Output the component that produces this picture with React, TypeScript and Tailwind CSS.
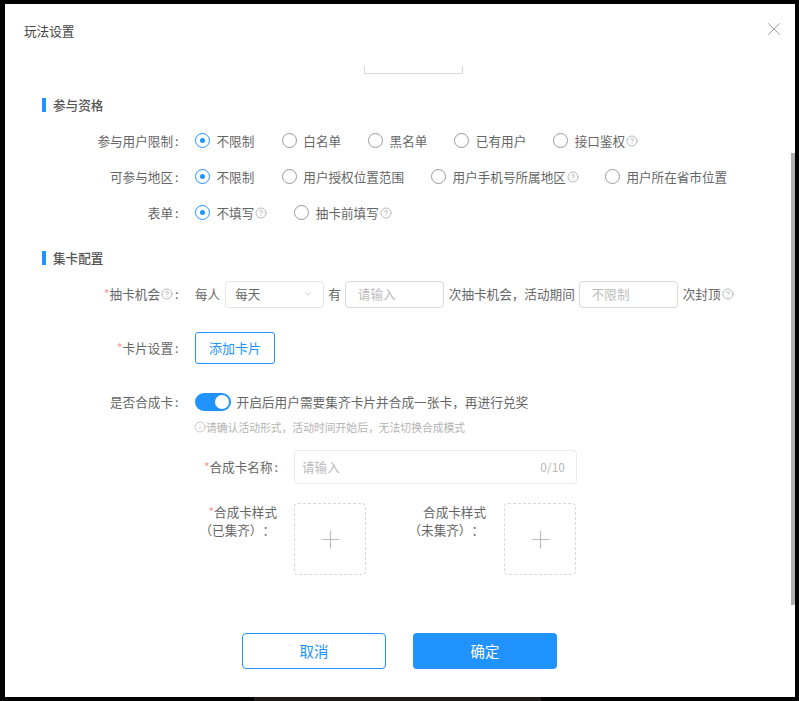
import React from 'react';
import { ChevronDown, CircleHelp, Info, Plus, X } from 'lucide-react';

const Help: React.FC = () => (
  <CircleHelp className="w-[12px] h-[12px] ml-px shrink-0 text-[#a8a8a8]" strokeWidth={1.6} />
);

const Star: React.FC = () => <span className="text-[#f89898]">*</span>;

const Colon: React.FC = () => <span className="ml-[2px]">:</span>;

const Radio: React.FC<{ label: string; checked?: boolean; help?: boolean; className?: string }> = ({
  label,
  checked,
  help,
  className,
}) => (
  <div className={`flex items-center shrink-0 ${className ?? ''}`}>
    {checked ? (
      <span className="w-[15px] h-[15px] rounded-full border border-[#2193ff] flex items-center justify-center">
        <span className="w-[5px] h-[5px] rounded-full bg-[#2193ff]" />
      </span>
    ) : (
      <span className="w-[15px] h-[15px] rounded-full border border-[#999999]" />
    )}
    <span className="ml-[6.5px]">{label}</span>
    {help && <Help />}
  </div>
);

const Row: React.FC<{ label: React.ReactNode; className?: string; children: React.ReactNode }> = ({
  label,
  className,
  children,
}) => (
  <div className={`flex items-center ${className ?? 'h-9'}`}>
    <div className="w-[136.5px] flex items-center justify-end shrink-0 whitespace-nowrap">{label}</div>
    <div className="ml-[16.5px] flex items-center">{children}</div>
  </div>
);

const Section: React.FC<{ title: string; className?: string }> = ({ title, className }) => (
  <div className={`flex items-center h-5 ${className ?? ''}`}>
    <span className="w-1 h-[14px] bg-[#2193ff]" />
    <span className="ml-[7px] font-medium text-[#555555]">{title}</span>
  </div>
);

const Upload: React.FC = () => (
  <div className="w-[72px] h-[72px] shrink-0 border border-dashed border-[#d9d9d9] rounded-sm flex items-center justify-center">
    <Plus className="w-[29px] h-[29px] text-[#bdbdbd]" strokeWidth={1} />
  </div>
);

const App: React.FC = () => {
  return (
    <div className="relative w-[799px] h-[701px] bg-black pt-1 pl-[5px] overflow-hidden font-['Noto_Sans_CJK_SC','Liberation_Sans',sans-serif] text-[12.6px] text-[#666666]">
      <div className="relative w-[790px] h-[693px] bg-white overflow-hidden">
        <div className="flex items-center justify-between h-[54px] pl-[19px] pr-[10px]">
          <span className="text-[#444444]">玩法设置</span>
          <X className="w-[22px] h-[22px] text-[#8c8c8c] -mt-[4px]" strokeWidth={0.9} />
        </div>

        <div className="pl-[37px]">
          <div className="mt-2 ml-[322px] w-[99px] h-2 border-x border-b border-[#d9d9d9]" />

          <Section title="参与资格" className="mt-[21px]" />

          <div className="mt-2">
            <Row
              label={
                <>
                  参与用户限制
                  <Colon />
                </>
              }
            >
              <Radio label="不限制" checked />
              <Radio label="白名单" className="ml-[27.5px]" />
              <Radio label="黑名单" className="ml-[27px]" />
              <Radio label="已有用户" className="ml-[27px]" />
              <Radio label="接口鉴权" help className="ml-[27px]" />
            </Row>
            <Row
              label={
                <>
                  可参与地区
                  <Colon />
                </>
              }
            >
              <Radio label="不限制" checked />
              <Radio label="用户授权位置范围" className="ml-[27.5px]" />
              <Radio label="用户手机号所属地区" help className="ml-[27px]" />
              <Radio label="用户所在省市位置" className="ml-[26px]" />
            </Row>
            <Row
              label={
                <>
                  表单
                  <Colon />
                </>
              }
            >
              <Radio label="不填写" help checked />
              <Radio label="抽卡前填写" help className="ml-[27px]" />
            </Row>
          </div>

          <Section title="集卡配置" className="mt-[17px]" />

          <Row
            className="h-9 mt-2"
            label={
              <>
                <Star />
                抽卡机会
                <Help />
                <Colon />
              </>
            }
          >
            <span>每人</span>
            <div className="ml-[5px] w-[99px] h-[27px] border border-[#e6e6e6] rounded-sm flex items-center justify-between pl-[9px] pr-[10px]">
              <span>每天</span>
              <ChevronDown className="w-[10px] h-[10px] text-[#a8a8a8]" strokeWidth={1.5} />
            </div>
            <span className="ml-1">有</span>
            <div className="ml-1 w-[99px] h-[27px] border border-[#d9d9d9] rounded-sm flex items-center pl-3 text-[#bbbbbb]">
              请输入
            </div>
            <span className="ml-[5px]">次抽卡机会，活动期间</span>
            <div className="ml-1 w-[99px] h-[27px] border border-[#d9d9d9] rounded-sm flex items-center pl-3 text-[#bbbbbb]">
              不限制
            </div>
            <span className="ml-[5px]">次封顶</span>
            <Help />
          </Row>

          <Row
            className="h-8 mt-5"
            label={
              <>
                <Star />
                卡片设置
                <Colon />
              </>
            }
          >
            <button className="w-20 h-8 border border-[#2193ff] rounded-[3px] text-[13px] text-[#2193ff]">添加卡片</button>
          </Row>

          <Row
            className="h-9 mt-5"
            label={
              <>
                是否合成卡
                <Colon />
              </>
            }
          >
            <span className="w-9 h-[18px] rounded-full bg-[#2193ff] flex items-center justify-end pr-[2px]">
              <span className="w-[14px] h-[14px] rounded-full bg-white" />
            </span>
            <span className="ml-[5.5px] text-[12.7px]">开启后用户需要集齐卡片并合成一张卡，再进行兑奖</span>
          </Row>

          <div className="ml-[153px] h-[14px] flex items-center text-[10.8px] text-[#b3b3b3]">
            <Info className="w-[12px] h-[12px] -ml-px" strokeWidth={1.4} />
            请确认活动形式，活动时间开始后，无法切换合成模式
          </div>

          <div className="mt-4 flex items-center h-[34px]">
            <div className="w-[236px] text-right shrink-0 whitespace-nowrap">
              <Star />
              合成卡名称
              <Colon />
            </div>
            <div className="ml-[16px] w-[283px] h-[34px] border border-[#ebebeb] rounded-sm flex items-center justify-between pl-[7px] pr-[11px] text-[#bbbbbb]">
              <span>请输入</span>
              <span className="text-[12px]">0/10</span>
            </div>
          </div>

          <div className="mt-[19px] flex">
            <div className="w-[236px] shrink-0 text-right leading-[18px] whitespace-nowrap [text-spacing-trim:space-all]">
              <div className="pr-px">
                <Star />
                合成卡样式
              </div>
              <div className="pr-[3px]">（已集齐）：</div>
            </div>
            <div className="ml-[16px]">
              <Upload />
            </div>
            <div className="w-[120px] mr-[18px] shrink-0 text-right leading-[18px] whitespace-nowrap [text-spacing-trim:space-all]">
              <div>合成卡样式</div>
              <div className="pr-[2px]">（未集齐）：</div>
            </div>
            <Upload />
          </div>

          <div className="mt-[58px] flex ml-[200px]">
            <button className="w-36 h-9 border border-[#2193ff] rounded-sm text-[14.4px] text-[#2193ff]">取消</button>
            <button className="ml-[27px] w-36 h-9 rounded-sm bg-[#2193ff] text-[14.4px] text-white">确定</button>
          </div>
        </div>

        {/* scrollbar thumb */}
        <div className="absolute right-0 top-[149px] w-1 h-[452px] bg-[#b0b0b0]" />
      </div>
      <div className="absolute left-[254px] top-[697px] w-[287px] h-1 bg-[#1c1a17]" />
    </div>
  );
};

export default App;
